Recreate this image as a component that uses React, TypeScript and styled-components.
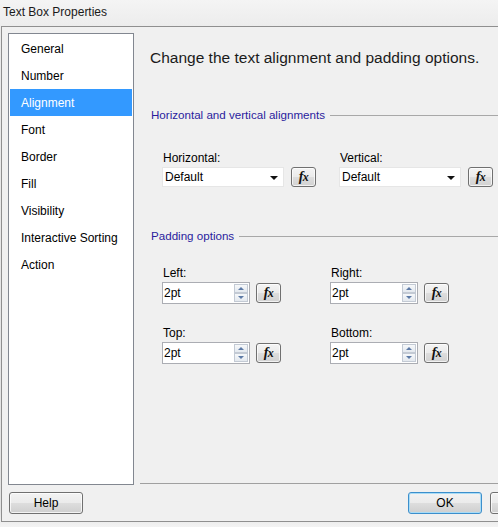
import React from "react";
import styled, { createGlobalStyle } from "styled-components";

const Global = createGlobalStyle`
  html, body { margin: 0; padding: 0; background: #ffffff; }
  body { font-family: "Liberation Sans", Arial, sans-serif; font-size: 12px; color: #000; }
  * { box-sizing: border-box; }
`;

const Window = styled.div`
  width: 498px;
  height: 527px;
  overflow: hidden;
  display: flex;
  flex-direction: column;
  background: linear-gradient(#f4f4f4, #ebebeb 30px, #e2e2e2 510px, #f3f3f3);
`;

const TitleBar = styled.div`
  height: 26px;
  flex: none;
  padding: 5px 0 0 3px;
  font-size: 12px;
  line-height: 15px;
  color: #1a1a1a;
`;

const Frame = styled.div`
  flex: none;
  width: 580px;
  height: 496px;
  margin-left: 1px;
  border: 1px solid #8f8f8f;
  background: #f0f0f0;
  display: flex;
  flex-direction: column;
  padding: 6px 0 0 6px;
`;

const Body = styled.div`
  display: flex;
  height: 452px;
  flex: none;
`;

const NavList = styled.ul`
  list-style: none;
  margin: 0;
  width: 126px;
  height: 452px;
  flex: none;
  background: #ffffff;
  border: 1px solid #828790;
  padding: 1px 1px 0 1px;
`;

const NavItem = styled.li<{ $selected?: boolean }>`
  height: 27px;
  padding-left: 11px;
  display: flex;
  align-items: center;
  background: ${(p) => (p.$selected ? "#3399ff" : "transparent")};
  color: ${(p) => (p.$selected ? "#ffffff" : "#000000")};
  font-size: 12px;
`;

const Pane = styled.div`
  flex: 1;
  margin-left: 6px;
  height: 451px;
  border-bottom: 1px solid #a0a0a0;
  display: flex;
  flex-direction: column;
  padding: 15px 0 0 10px;
`;

const Heading = styled.h1`
  margin: 0;
  font-weight: normal;
  font-size: 15.5px;
  line-height: 20px;
  color: #1b1b1b;
`;

const GroupHeader = styled.div<{ $top: number }>`
  margin-top: ${(p) => p.$top}px;
  margin-left: 1px;
  display: flex;
  align-items: center;
  gap: 5px;
  color: #2a1c9e;
  font-size: 11.6px;
  line-height: 14px;

  &::after {
    content: "";
    flex: 1;
    height: 1px;
    background: #a8a8a8;
    margin-top: 1px;
  }
`;

const FieldGrid = styled.div<{ $col: number; $top: number; $rowGap?: number }>`
  margin-top: ${(p) => p.$top}px;
  margin-left: 12px;
  display: grid;
  grid-template-columns: ${(p) => p.$col}px ${(p) => p.$col}px;
  row-gap: ${(p) => p.$rowGap ?? 0}px;
`;

const Field = styled.div`
  display: flex;
  flex-direction: column;
`;

const FieldLabel = styled.label`
  font-size: 12px;
  line-height: 15px;
  height: 15px;
  padding-left: 1px;
  margin-bottom: 1px;
`;

const ControlRow = styled.div<{ $gap: number }>`
  display: flex;
  align-items: center;
  gap: ${(p) => p.$gap}px;
`;

const Combo = styled.div`
  width: 122px;
  height: 20px;
  background: #ffffff;
  border: 1px solid #e6e6e6;
  display: flex;
  align-items: center;
  justify-content: space-between;
  padding: 0 5px 0 2px;
  font-size: 12px;
`;

const ComboArrow = styled.span`
  width: 0;
  height: 0;
  border-left: 4px solid transparent;
  border-right: 4px solid transparent;
  border-top: 4px solid #111;
  margin-top: 1px;
`;

const FxButton = styled.button`
  width: 25px;
  height: 20px;
  padding: 0;
  border: 1px solid #707070;
  border-radius: 3px;
  background: linear-gradient(#f4f4f4, #ebebeb 48%, #dddddd 52%, #d2d2d2);
  box-shadow: inset 0 0 0 1px rgba(255, 255, 255, 0.7);
  font-family: "Liberation Serif", "Times New Roman", serif;
  font-style: italic;
  font-weight: bold;
  font-size: 14px;
  line-height: 16px;
  color: #111;
  display: flex;
  align-items: center;
  justify-content: center;
  letter-spacing: -0.5px;

  & span:last-child {
    font-size: 12px;
  }
`;

const Spin = styled.div`
  width: 88px;
  height: 22px;
  background: #ffffff;
  border: 1px solid #abadb3;
  display: flex;
  align-items: center;
  padding: 0 1px 0 1px;
  font-size: 12px;
`;

const SpinValue = styled.span`
  flex: 1;
`;

const SpinButtons = styled.div`
  width: 14px;
  height: 18px;
  display: flex;
  flex-direction: column;
`;

const SpinBtn = styled.div<{ $up?: boolean }>`
  flex: 1;
  border: 1px solid #c3cad4;
  background: linear-gradient(#f6f8fa, #e4e9ef);
  display: flex;
  align-items: center;
  justify-content: center;

  &::before {
    content: "";
    width: 0;
    height: 0;
    border-left: 3px solid transparent;
    border-right: 3px solid transparent;
    ${(p) =>
      p.$up
        ? "border-bottom: 3px solid #5d7aa6;"
        : "border-top: 3px solid #5d7aa6;"}
  }
`;

const Footer = styled.div`
  display: flex;
  align-items: center;
  margin-top: 7px;
  padding-left: 1px;
  padding-right: 16px;
`;

const ButtonGroup = styled.div`
  margin-left: auto;
  display: flex;
  gap: 8px;
`;

const DialogButton = styled.button<{ $default?: boolean }>`
  width: 74px;
  height: 22px;
  padding: 0;
  border-radius: 3px;
  border: 1px solid ${(p) => (p.$default ? "#3c8fcc" : "#707070")};
  background: linear-gradient(#f3f3f3, #ebebeb 48%, #dddddd 52%, #cfcfcf);
  box-shadow: ${(p) =>
    p.$default ? "inset 0 0 0 1px #a9dcf6" : "inset 0 0 0 1px rgba(255,255,255,0.75)"};
  font-family: "Liberation Sans", Arial, sans-serif;
  font-size: 12px;
  color: #000;
`;

const navItems = [
  "General",
  "Number",
  "Alignment",
  "Font",
  "Border",
  "Fill",
  "Visibility",
  "Interactive Sorting",
  "Action",
];

const Fx = () => (
  <FxButton type="button">
    <span>f</span>
    <span>x</span>
  </FxButton>
);

const SpinField = ({ label, value }: { label: string; value: string }) => (
  <Field>
    <FieldLabel>{label}</FieldLabel>
    <ControlRow $gap={6}>
      <Spin>
        <SpinValue>{value}</SpinValue>
        <SpinButtons>
          <SpinBtn $up />
          <SpinBtn />
        </SpinButtons>
      </Spin>
      <Fx />
    </ControlRow>
  </Field>
);

const ComboField = ({ label, value }: { label: string; value: string }) => (
  <Field>
    <FieldLabel>{label}</FieldLabel>
    <ControlRow $gap={7}>
      <Combo>
        <span>{value}</span>
        <ComboArrow />
      </Combo>
      <Fx />
    </ControlRow>
  </Field>
);

export default function App() {
  return (
    <>
      <Global />
      <Window>
        <TitleBar>Text Box Properties</TitleBar>
        <Frame>
          <Body>
            <NavList>
              {navItems.map((item) => (
                <NavItem key={item} $selected={item === "Alignment"}>
                  {item}
                </NavItem>
              ))}
            </NavList>
            <Pane>
              <Heading>Change the text alignment and padding options.</Heading>
              <GroupHeader $top={40}>Horizontal and vertical alignments</GroupHeader>
              <FieldGrid $col={177} $top={29}>
                <ComboField label="Horizontal:" value="Default" />
                <ComboField label="Vertical:" value="Default" />
              </FieldGrid>
              <GroupHeader $top={42}>Padding options</GroupHeader>
              <FieldGrid $col={168} $top={23} $rowGap={22}>
                <SpinField label="Left:" value="2pt" />
                <SpinField label="Right:" value="2pt" />
                <SpinField label="Top:" value="2pt" />
                <SpinField label="Bottom:" value="2pt" />
              </FieldGrid>
            </Pane>
          </Body>
          <Footer>
            <DialogButton type="button">Help</DialogButton>
            <ButtonGroup>
              <DialogButton type="button" $default>
                OK
              </DialogButton>
              <DialogButton type="button">Cancel</DialogButton>
            </ButtonGroup>
          </Footer>
        </Frame>
      </Window>
    </>
  );
}
